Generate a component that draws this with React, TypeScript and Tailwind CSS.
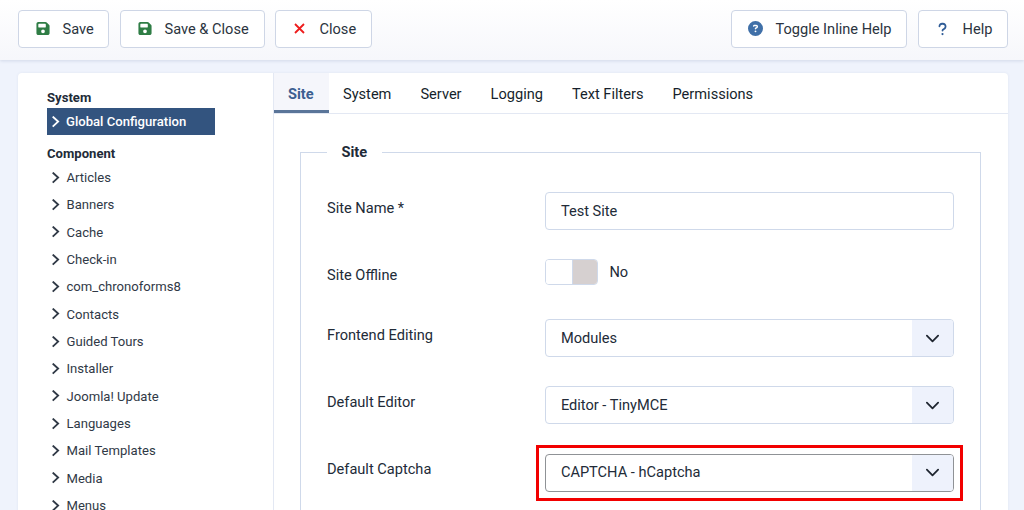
import React from 'react';
import { FaCircleQuestion, FaQuestion, FaFloppyDisk } from 'react-icons/fa6';

const components = [
  'Articles',
  'Banners',
  'Cache',
  'Check-in',
  'com_chronoforms8',
  'Contacts',
  'Guided Tours',
  'Installer',
  'Joomla! Update',
  'Languages',
  'Mail Templates',
  'Media',
  'Menus',
];

const tabs = ['Site', 'System', 'Server', 'Logging', 'Text Filters', 'Permissions'];

const ChevronRight: React.FC = () => (
  <svg className="w-[9px] h-[12px] shrink-0" viewBox="0 0 9 12" fill="none" stroke="currentColor" strokeWidth="1.9">
    <path d="M1.7 0.6 L7.1 5.6 L1.7 10.6" />
  </svg>
);

const CloseIcon: React.FC = () => (
  <svg className="w-[11px] h-[11px]" viewBox="0 0 11 11" fill="none" stroke="currentColor" strokeWidth="1.8">
    <path d="M1 1 L10 10 M10 1 L1 10" />
  </svg>
);

type ToolbarButtonProps = {
  icon: React.ReactNode;
  label: string;
  className: string;
};

const ToolbarButton: React.FC<ToolbarButtonProps> = ({ icon, label, className }) => (
  <button
    className={`flex h-[37.5px] items-center rounded-[4px] border border-[#ced6e6] bg-white pl-[15.5px] text-[14.6px] text-[#2b3440] ${className}`}
  >
    <span className="flex w-4 justify-center">{icon}</span>
    <span className="ml-3 pt-0.5 whitespace-nowrap">{label}</span>
  </button>
);

const SelectBox: React.FC<{ value: string; focused?: boolean }> = ({ value, focused }) => (
  <div
    className={`flex h-[38px] w-full overflow-hidden rounded-[4px] border bg-white ${
      focused ? 'border-[#8f9296]' : 'border-[#cfd9ea]'
    }`}
  >
    <span className="flex flex-1 items-center pt-px pl-[14.5px]">{value}</span>
    <span className="flex w-[41px] items-center justify-center bg-[#eef2fc]">
      <svg className="h-[15px] w-[15px]" viewBox="0 0 16 16" fill="none" stroke="#1f2630" strokeWidth="1.9">
        <path strokeLinecap="round" strokeLinejoin="round" d="M2 5l6 6 6-6" />
      </svg>
    </span>
  </div>
);

const Field: React.FC<{ label: string; className: string; children: React.ReactNode }> = ({
  label,
  className,
  children,
}) => (
  <div className={`flex items-start ${className}`}>
    <label className="w-[218.4px] shrink-0 pt-[5.5px] leading-5">{label}</label>
    <div className="w-[409px]">{children}</div>
  </div>
);

const App: React.FC = () => {
  return (
    <div className="flex h-[510px] w-[1024px] flex-col overflow-hidden bg-[#eff3fc] font-['Roboto',sans-serif] text-[14.6px] text-[#222b38]">
      {/* Toolbar */}
      <header className="flex h-[60px] shrink-0 items-start bg-linear-to-b from-white to-[#f6f7fb] pt-[10px] pr-4 pl-[18px] shadow-[0_1px_3px_rgba(60,80,130,0.16)]">
        <ToolbarButton
          className="w-[91px]"
          label="Save"
          icon={<FaFloppyDisk className="h-[15px] w-[14px] text-[#2f7d45]" />}
        />
        <ToolbarButton
          className="ml-[11px] w-[145px]"
          label="Save & Close"
          icon={<FaFloppyDisk className="h-[15px] w-[14px] text-[#2f7d45]" />}
        />
        <ToolbarButton
          className="ml-[10px] w-[97px]"
          label="Close"
          icon={<span className="text-[#ee1c1c]"><CloseIcon /></span>}
        />
        <ToolbarButton
          className="ml-auto w-[176px]"
          label="Toggle Inline Help"
          icon={<FaCircleQuestion className="h-[15px] w-[15px] text-[#4070a8]" />}
        />
        <ToolbarButton
          className="ml-[11px] w-[90px]"
          label="Help"
          icon={<FaQuestion className="h-[14px] w-[9px] text-[#2f5c96]" />}
        />
      </header>

      <main className="mx-4 mt-[13px] ml-[18px] flex flex-1 rounded-t-[4px] bg-white shadow-[0_0_3px_rgba(60,80,130,0.08)]">
        {/* Sidebar */}
        <aside className="w-[256px] shrink-0 border-r border-[#e3e8f3] pt-[15px] pl-[29px] text-[13.1px]">
          <h2 className="h-5 leading-[19px] font-bold">System</h2>
          <div className="flex h-[27px] w-[168px] items-center gap-[6px] bg-[#33547f] pl-[4px] font-medium text-white">
            <ChevronRight />
            <span>Global Configuration</span>
          </div>
          <h2 className="mt-[9px] h-5 leading-[19px] font-bold">Component</h2>
          <ul>
            {components.map((name) => (
              <li key={name} className="flex h-[27.35px] items-center gap-[6.5px] pl-[4px] text-[#303946]">
                <ChevronRight />
                <span>{name}</span>
              </li>
            ))}
          </ul>
        </aside>

        <section className="min-w-0 flex-1">
          {/* Tabs */}
          <nav className="flex h-[41px] border-b border-[#e3e8f3]">
            {tabs.map((tab) => (
              <div
                key={tab}
                className={
                  tab === 'Site'
                    ? 'h-[40px] w-[54.5px] border-b-3 border-[#5a7599] bg-[#f5f6fb] px-[14px] pt-[10px] leading-[22px] font-bold text-[#3c5f91]'
                    : 'px-[14.5px] pt-[10px] leading-[22px] text-[#161f2c]'
                }
              >
                {tab}
              </div>
            ))}
          </nav>

          <fieldset className="mt-[26px] ml-[26px] h-[420px] w-[681.4px] border border-[#cfd9ea] pl-[26px]">
            <legend className="px-[14.5px] leading-6 font-bold">Site</legend>
            <Field label="Site Name *" className="mt-[28px] h-[67px]">
              <div className="flex h-[38px] items-center rounded-[4px] border border-[#cfd9ea] pt-px pl-[14.5px]">
                Test Site
              </div>
            </Field>
            <Field label="Site Offline" className="h-[60px]">
              <div className="flex h-[26px] items-center">
                <div className="flex h-[26px] w-[53px] overflow-hidden rounded-[4px] border border-[#cfd9ea]">
                  <span className="w-1/2 bg-white" />
                  <span className="w-1/2 border-l border-[#cfd9ea] bg-[#d6d0d0]" />
                </div>
                <span className="ml-[11px] pt-px">No</span>
              </div>
            </Field>
            <Field label="Frontend Editing" className="h-[67.4px]">
              <SelectBox value="Modules" />
            </Field>
            <Field label="Default Editor" className="h-[67.4px]">
              <SelectBox value="Editor - TinyMCE" />
            </Field>
            <Field label="Default Captcha" className="h-[67px]">
              <div className="-m-[9px] border-3 border-[#f20000] p-[6px]">
                <SelectBox value="CAPTCHA - hCaptcha" focused />
              </div>
            </Field>
          </fieldset>
        </section>
      </main>
    </div>
  );
};

export default App;
